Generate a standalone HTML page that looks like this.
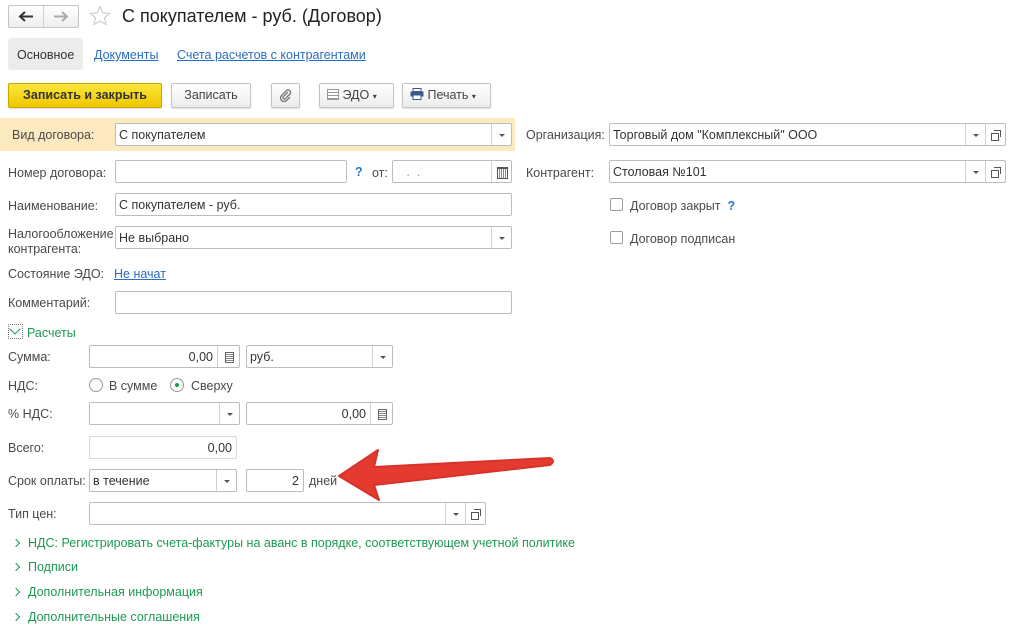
<!DOCTYPE html>
<html><head><meta charset="utf-8"><style>
*{box-sizing:border-box;margin:0;padding:0}
body{width:1024px;height:644px;background:#fff;font-family:"Liberation Sans",Arial,sans-serif;font-size:12.5px;color:#333;position:relative;overflow:hidden}
.a{position:absolute;white-space:nowrap}
.lbl{position:absolute;color:#4a4a4a;font-size:12.5px;line-height:14px;white-space:nowrap}
.in{position:absolute;border:1px solid #bdbdbd;border-radius:2px;background:#fff;height:23px;font-size:12.5px;line-height:22px;padding-left:3px;color:#333;white-space:nowrap;overflow:hidden}
.dd{position:absolute;top:0;bottom:0;width:20px;border-left:1px solid #d0d0d0}
.dd:after{content:"";position:absolute;left:7px;top:10px;border-left:3px solid transparent;border-right:3px solid transparent;border-top:3px solid #555}
.op{position:absolute;top:0;bottom:0;width:20px;border-left:1px solid #d0d0d0}
.op:before{content:"";position:absolute;left:5px;top:9px;width:6px;height:6px;border:1px solid #555;background:#fff}
.op:after{content:"";position:absolute;left:8px;top:6px;width:6px;height:6px;border:1px solid #555;border-left:none;border-bottom:none}
.btn{position:absolute;top:83px;height:25px;border:1px solid #c4c4c4;border-radius:2px;background:linear-gradient(#fff,#ececec);font-size:12.5px;line-height:23px;text-align:center;color:#444;box-shadow:0 1px 1px rgba(0,0,0,.12)}
.cb{position:absolute;width:13px;height:13px;border:1px solid #9e9e9e;border-radius:2px;background:#fff}
.sec{position:absolute;left:13px;color:#1d9a53;font-size:12.5px;white-space:nowrap}
.sec:before{content:"";display:inline-block;width:5px;height:5px;border-right:1.3px solid #1d9a53;border-bottom:1.3px solid #1d9a53;transform:rotate(-45deg);margin-right:9px;position:relative;top:-1px}
.calc{position:absolute;top:0;bottom:0;width:22px;border-left:1px solid #d0d0d0}
.calc:after{content:"";position:absolute;left:7px;top:6px;width:7px;height:9px;border:1px solid #666;background:repeating-linear-gradient(#fff 0 1px,#888 1px 2px)}
.cal{position:absolute;top:0;bottom:0;width:20px;border-left:1px solid #d0d0d0}
.cal:after{content:"";position:absolute;left:5px;top:6px;width:9px;height:9px;border:1px solid #555;border-top-width:2px;background:repeating-linear-gradient(90deg,#fff 0 1px,#888 1px 2px)}
</style></head><body>

<div class="a" style="left:8px;top:5px;width:71px;height:23px;border:1px solid #c4c4c4;border-radius:2px;background:linear-gradient(#fff,#eee)"></div>
<div class="a" style="left:43px;top:6px;width:1px;height:21px;background:#d0d0d0"></div>
<svg class="a" style="left:18px;top:11px" width="16" height="11" viewBox="0 0 16 11"><path d="M15 5.5H3M7 1L2 5.5 7 10" fill="none" stroke="#333" stroke-width="2"/></svg>
<svg class="a" style="left:53px;top:11px" width="16" height="11" viewBox="0 0 16 11"><path d="M1 5.5h12M9 1l5 4.5L9 10" fill="none" stroke="#aaa" stroke-width="2"/></svg>
<svg class="a" style="left:89px;top:5px" width="22" height="22" viewBox="0 0 22 22"><path d="M11 1.5l2.8 6.3 6.8.6-5.2 4.5 1.6 6.7L11 16l-6 3.6 1.6-6.7L1.4 8.4l6.8-.6z" fill="none" stroke="#c8c8c8" stroke-width="1"/></svg>
<div class="a" style="left:122px;top:6px;font-size:18px;color:#222">С покупателем - руб. (Договор)</div>

<div class="a" style="left:8px;top:38px;width:75px;height:32px;background:#ececec;border-radius:3px"></div>
<div class="a" style="left:17px;top:48px;color:#333">Основное</div>
<div class="a" style="left:94px;top:48px;color:#2a6ec4;text-decoration:underline">Документы</div>
<div class="a" style="left:177px;top:48px;color:#2a6ec4;text-decoration:underline">Счета расчетов с контрагентами</div>

<div class="btn" style="left:8px;width:154px;background:linear-gradient(#fbe53a,#f0c800);border-color:#c9a800;font-weight:bold;color:#333">Записать и закрыть</div>
<div class="btn" style="left:171px;width:80px">Записать</div>
<div class="btn" style="left:271px;width:29px"><svg width="14" height="14" viewBox="0 0 14 14" style="margin-top:5px"><path d="M9 3L4 8a1.5 1.5 0 002 2l5-5a2.5 2.5 0 00-3.5-3.5L2.5 6.5a3.5 3.5 0 005 5L11 8" fill="none" stroke="#777" stroke-width="1.3"/></svg></div>
<div class="btn" style="left:319px;width:75px;text-align:left;padding-left:7px"><span style="display:inline-block;width:12px;height:11px;border:1px solid #999;vertical-align:-1px;background:repeating-linear-gradient(#fff 0 2px,#999 2px 3px)"></span> ЭДО <span style="font-size:8px">▾</span></div>
<div class="btn" style="left:402px;width:89px;text-align:left;padding-left:7px"><svg width="14" height="12" viewBox="0 0 14 12" style="vertical-align:-1px"><rect x="3" y="0.5" width="8" height="3" fill="#fff" stroke="#3a5a8a"/><rect x="0.5" y="3.5" width="13" height="5" fill="#3a5a8a"/><rect x="3" y="7" width="8" height="4.5" fill="#fff" stroke="#3a5a8a"/></svg> Печать <span style="font-size:8px">▾</span></div>

<div class="a" style="left:0;top:118px;width:515px;height:33px;background:#fde9bf"></div>
<div class="lbl" style="left:12px;top:128px">Вид договора:</div>
<div class="in" style="left:115px;top:123px;width:397px">С покупателем<div class="dd" style="right:0"></div></div>

<div class="lbl" style="left:8px;top:166px">Номер договора:</div>
<div class="in" style="left:115px;top:160px;width:232px"></div>
<div class="a" style="left:355px;top:165px;color:#2a78c8;font-weight:bold">?</div>
<div class="lbl" style="left:372px;top:166px">от:</div>
<div class="in" style="left:392px;top:160px;width:120px;color:#999">&nbsp;&nbsp;&nbsp;. &nbsp;.<div class="cal" style="right:0"></div></div>

<div class="lbl" style="left:8px;top:199px">Наименование:</div>
<div class="in" style="left:115px;top:193px;width:397px">С покупателем - руб.</div>

<div class="lbl" style="left:8px;top:227px;line-height:15px">Налогообложение<br>контрагента:</div>
<div class="in" style="left:115px;top:226px;width:397px">Не выбрано<div class="dd" style="right:0"></div></div>

<div class="lbl" style="left:8px;top:267px">Состояние ЭДО:</div>
<div class="a" style="left:114px;top:267px;color:#2a6ec4;text-decoration:underline">Не начат</div>

<div class="lbl" style="left:8px;top:296px">Комментарий:</div>
<div class="in" style="left:115px;top:291px;width:397px"></div>

<div class="lbl" style="left:526px;top:128px">Организация:</div>
<div class="in" style="left:609px;top:123px;width:397px">Торговый дом "Комплексный" ООО<div class="dd" style="right:20px"></div><div class="op" style="right:0"></div></div>
<div class="lbl" style="left:526px;top:166px">Контрагент:</div>
<div class="in" style="left:609px;top:160px;width:397px">Столовая №101<div class="dd" style="right:20px"></div><div class="op" style="right:0"></div></div>
<div class="cb" style="left:610px;top:198px"></div>
<div class="lbl" style="left:630px;top:199px">Договор закрыт <span style="color:#2a78c8;font-weight:bold">&nbsp;?</span></div>
<div class="cb" style="left:610px;top:231px"></div>
<div class="lbl" style="left:630px;top:232px">Договор подписан</div>

<div class="a" style="left:8px;top:324px;width:15px;height:15px;border:1px dotted #777"></div>
<div class="a" style="left:11px;top:325px;width:8px;height:8px;border-right:1.4px solid #1d9a53;border-bottom:1.4px solid #1d9a53;transform:rotate(45deg)"></div>
<div class="a" style="left:27px;top:326px;color:#1d9a53">Расчеты</div>

<div class="lbl" style="left:8px;top:350px">Сумма:</div>
<div class="in" style="left:89px;top:345px;width:151px;text-align:right;padding-right:26px">0,00<div class="calc" style="right:0"></div></div>
<div class="in" style="left:246px;top:345px;width:147px">руб.<div class="dd" style="right:0"></div></div>

<div class="lbl" style="left:8px;top:379px">НДС:</div>
<div class="a" style="left:89px;top:378px;width:14px;height:14px;border:1px solid #999;border-radius:50%"></div>
<div class="lbl" style="left:109px;top:379px">В сумме</div>
<div class="a" style="left:170px;top:378px;width:14px;height:14px;border:1px solid #999;border-radius:50%"></div>
<div class="a" style="left:175px;top:383px;width:4px;height:4px;background:#1d9a53;border-radius:50%"></div>
<div class="lbl" style="left:191px;top:379px">Сверху</div>

<div class="lbl" style="left:8px;top:407px">% НДС:</div>
<div class="in" style="left:89px;top:402px;width:151px"><div class="dd" style="right:0"></div></div>
<div class="in" style="left:246px;top:402px;width:147px;text-align:right;padding-right:26px">0,00<div class="calc" style="right:0"></div></div>

<div class="lbl" style="left:8px;top:441px">Всего:</div>
<div class="in" style="left:89px;top:436px;width:148px;text-align:right;padding-right:4px;border-color:#d8d8d8">0,00</div>

<div class="lbl" style="left:8px;top:474px">Срок оплаты:</div>
<div class="in" style="left:89px;top:469px;width:148px">в течение<div class="dd" style="right:0"></div></div>
<div class="in" style="left:246px;top:469px;width:58px;text-align:right;padding-right:4px">2</div>
<div class="lbl" style="left:309px;top:474px">дней</div>

<div class="lbl" style="left:8px;top:507px">Тип цен:</div>
<div class="in" style="left:89px;top:502px;width:397px"><div class="dd" style="right:20px"></div><div class="op" style="right:0"></div></div>

<div class="sec" style="top:536px">НДС: Регистрировать счета-фактуры на аванс в порядке, соответствующем учетной политике</div>
<div class="sec" style="top:560px">Подписи</div>
<div class="sec" style="top:585px">Дополнительная информация</div>
<div class="sec" style="top:610px">Дополнительные соглашения</div>

<svg class="a" style="left:330px;top:440px" width="230" height="70" viewBox="330 440 230 70">
<path d="M339 476 L378 450 L374 467 L550 458 Q556 461 550 465 L374 485 L379 500 Z" fill="#e53a2f" stroke="#d6332a" stroke-width="2" stroke-linejoin="round"/>
</svg>
</body></html>
